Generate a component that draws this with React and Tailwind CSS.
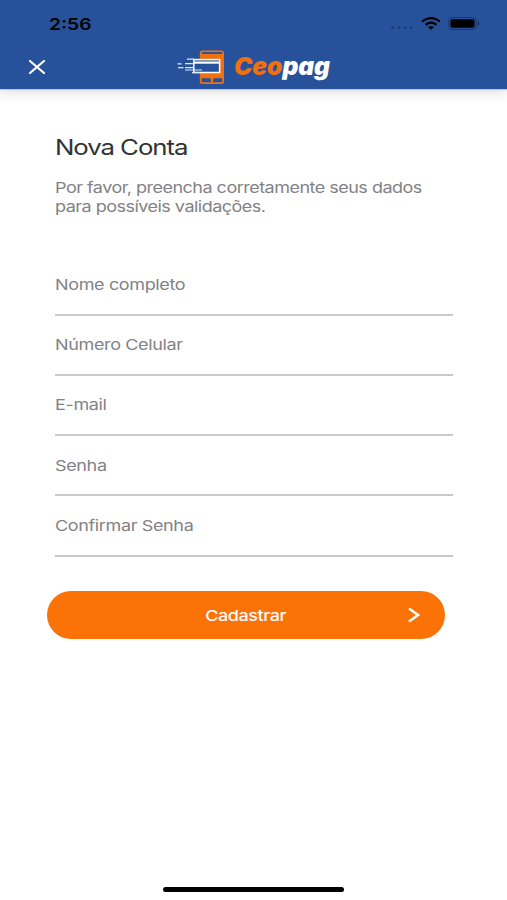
import React from 'react'

const fields = [
  { id: 'name', label: 'Nome completo', type: 'text' },
  { id: 'phone', label: 'Número Celular', type: 'tel' },
  { id: 'email', label: 'E-mail', type: 'email' },
  { id: 'password', label: 'Senha', type: 'password' },
  { id: 'confirm', label: 'Confirmar Senha', type: 'password' },
]

function StatusBar() {
  return (
    <div className="flex h-[46px] items-center justify-between pl-[49px] pr-[27px] text-black">
      <span className="mt-px origin-left scale-x-[1.2] text-base font-semibold leading-5">2:56</span>
      <div className="flex items-center">
        <svg className="mr-2 mt-2 h-[3px] w-[22px]" viewBox="0 0 22 3" fill="#1b386f">
          <circle cx="1.5" cy="1.5" r="1.3" />
          <circle cx="7.8" cy="1.5" r="1.3" />
          <circle cx="14" cy="1.5" r="1.3" />
          <circle cx="20.2" cy="1.5" r="1.3" />
        </svg>
        <svg className="mr-[7px] h-[13px] w-5" viewBox="0 0 20 13" fill="none" stroke="currentColor" strokeWidth="2.3">
          <path d="M1.2 4.7C6.2 -.1 13.8 -.1 18.8 4.7" />
          <path d="M4.6 7.9C7.8 5 12.2 5 15.4 7.9" />
          <path d="M7.1 10.2C8.8 8.7 11.2 8.7 12.9 10.2L10 12.8Z" fill="currentColor" stroke="none" />
        </svg>
        <svg className="h-[13px] w-8" viewBox="0 0 32 13">
          <rect x=".6" y=".6" width="27.8" height="11.8" rx="3.5" fill="none" stroke="#1b3668" />
          <rect x="2.4" y="2.2" width="24.2" height="8.6" rx="2" fill="#000" />
          <path d="M30 4.3C31.8 5.3 31.8 7.7 30 8.7Z" fill="#142a52" />
        </svg>
      </div>
    </div>
  )
}

function Logo() {
  return (
    <svg className="h-9 w-[156px]" viewBox="0 0 156 36">
      {/* phone */}
      <rect x="23.8" y="1.5" width="24.2" height="33.6" rx="2.5" fill="#f07010" />
      <path d="M26 4H46.2" stroke="#27519b" strokeWidth="1.9" />
      <path d="M25.6 29.2H34.2L35 31.2V33.3H27Q25.6 33.3 25.6 32ZM46.2 29.2H37.8L37 31.2V33.3H45Q46.2 33.3 46.2 32Z" fill="#27519b" />
      {/* card */}
      <rect x="17.8" y="10.6" width="25.8" height="12.9" fill="#27519b" stroke="#fff" strokeWidth="1.5" />
      <path d="M17.8 13.6H43.6" stroke="#fff" strokeWidth="2.2" />
      <path d="M17.8 12.2H43.6" stroke="#8fa8d4" strokeWidth=".6" />
      {/* speed lines */}
      <path d="M11 10.1H18M9 14.6H18M2 18.6H7.5M9 18.6H17M9 21H26M16 23.7H23M1.5 14.8H5.5" stroke="#dce6f8" strokeWidth="1.2" />
      <text
        x="58"
        y="26.3"
        textLength="96"
        lengthAdjust="spacingAndGlyphs"
        className="font-['Inter',sans-serif] text-[24.5px] font-black italic"
      >
        <tspan fill="#f07010">Ceo</tspan>
        <tspan fill="#fff">pag</tspan>
      </text>
    </svg>
  )
}

function Header() {
  return (
    <header className="h-[89px] bg-[#27519b] shadow-[0_1px_1px_#bfcbe0,0_3px_12px_rgba(60,45,30,0.17)]">
      <StatusBar />
      <div className="grid h-[42px] grid-cols-[176px_156px_1fr] items-center">
        <button type="button" aria-label="Fechar" className="ml-7 w-[18px]">
          <svg className="h-[14px] w-[18px]" viewBox="0 0 18 14" fill="none" stroke="#fff" strokeWidth="2.2" strokeLinecap="round">
            <path d="M2 1L16 13M16 1L2 13" />
          </svg>
        </button>
        <Logo />
      </div>
    </header>
  )
}

function Field({ id, label, type }) {
  return (
    <div className="h-[60.2px] border-b-2 border-[#c9c9cb] pt-[19.4px]">
      <input
        id={id}
        type={type}
        placeholder={label}
        className="block h-5 w-[330px] origin-left scale-x-[1.2] bg-transparent text-[15px] leading-5 tracking-[-0.3px] outline-none placeholder:text-[#828285] placeholder:opacity-100"
      />
    </div>
  )
}

function App() {
  return (
    <div className="flex h-[900px] w-full flex-col overflow-hidden bg-white font-['Inter',sans-serif]">
      <Header />
      <main className="flex-1 pl-[55px] pr-[54px] pt-11">
        <h1 className="w-fit origin-left scale-x-[1.2] text-[21.5px] leading-7 tracking-[-0.9px] text-[#333335]">Nova Conta</h1>
        <p className="mt-[16.6px] w-fit origin-left scale-x-[1.2] whitespace-nowrap text-[15px] leading-[19px] tracking-[-0.43px] text-[#828285]">
          Por favor, preencha corretamente seus dados
          <br />
          para possíveis validações.
        </p>
        <form className="mt-[40px]" onSubmit={(e) => e.preventDefault()}>
          {fields.map((f) => (
            <Field key={f.id} {...f} />
          ))}
          <button
            type="submit"
            className="-ml-2 mt-[34px] grid h-[48.5px] w-[398px] grid-cols-[1fr_auto_1fr] items-center rounded-full bg-[#fb7206] text-white"
          >
            <span className="col-start-2 mt-0.5 scale-x-[1.2] text-[15px] font-medium leading-5 tracking-[-0.37px]">Cadastrar</span>
            <svg className="mr-[24px] h-4 w-[14px] justify-self-end" viewBox="0 0 14 16" fill="none" stroke="#fff" strokeWidth="2.6">
              <path d="M2 1.5L11 8L2 14.5" />
            </svg>
          </button>
        </form>
      </main>
      <div className="mb-2 h-[5px] w-[181px] self-center rounded-full bg-black" />
    </div>
  )
}

export default App
